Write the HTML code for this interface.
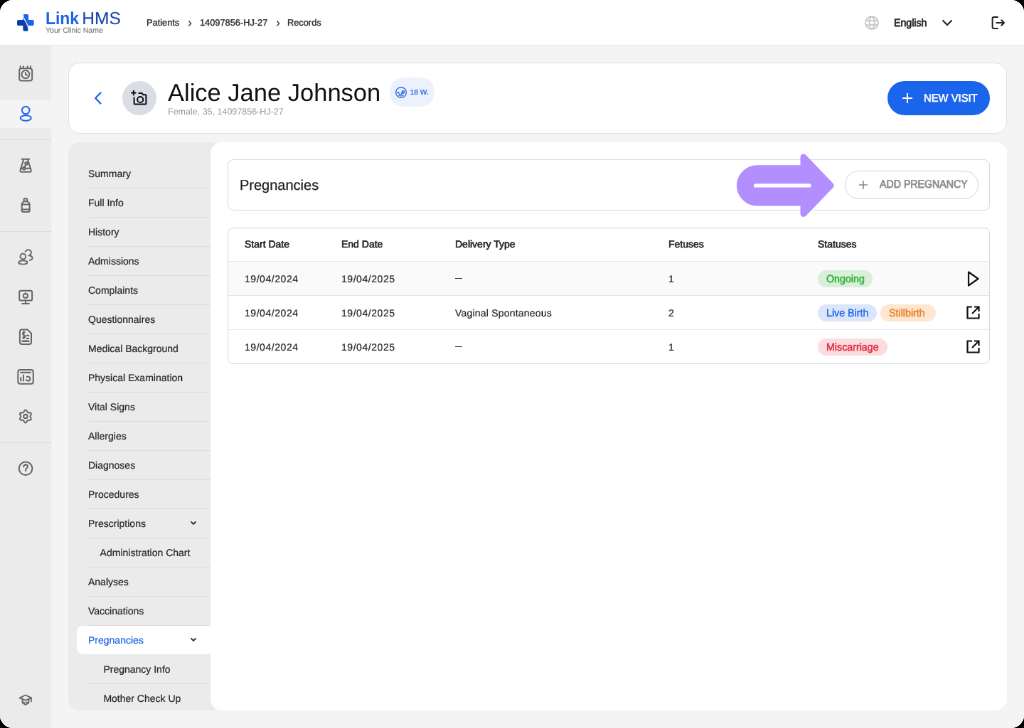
<!DOCTYPE html>
<html><head><meta charset="utf-8">
<style>
html,body{margin:0;padding:0;background:#000;width:1024px;height:728px;overflow:hidden}
#frame{position:absolute;left:0;top:0;width:1024px;height:728px;border-radius:13px;overflow:hidden;background:#f4f4f4}
#app{position:absolute;left:0;top:0;width:1440px;height:1024px;transform:scale(0.711111);text-rendering:geometricPrecision;will-change:transform;transform-origin:0 0;font-family:"Liberation Sans",sans-serif;color:#222;background:#f4f4f4}
.a{position:absolute;white-space:nowrap}
svg{position:absolute;overflow:visible}
/* header */
#hdr{position:absolute;left:0;top:0;width:1440px;height:63px;background:#fff;border-bottom:1px solid #e6e6e6}
/* sidebar */
#side{position:absolute;left:0;top:64px;width:72px;height:960px;background:#ebebeb}
.sdiv{position:absolute;left:0;width:72px;height:1px;background:#dcdcdc}
/* header card */
#pcard{position:absolute;left:96px;top:88px;width:1318px;height:98px;background:#fff;border:1px solid #dde2e8;border-radius:16px}
#menu{position:absolute;left:96px;top:200px;width:216px;height:799px;background:#ebebeb;border-radius:16px;overflow:hidden}
.mi{position:absolute;left:28px;width:200px;height:40px;border-bottom:1px solid #dcdcdc}
.mt{position:absolute;font-size:14px;color:#262626;line-height:16px;top:12px;-webkit-text-stroke:0.2px #262626}
#content{position:absolute;left:296px;top:200px;width:1120px;height:799px;background:#fff;border-radius:16px}
.card{position:absolute;background:#fff;border:1px solid #d3d9e0;border-radius:8px}
.th{position:absolute;font-size:14px;color:#222;line-height:16px;-webkit-text-stroke:0.6px #222}
.td{position:absolute;font-size:14px;color:#262626;line-height:16px;-webkit-text-stroke:0.2px #262626}
.bt{position:absolute;left:12px;top:3.9px;font-size:15px;line-height:18px;white-space:nowrap;transform:scaleX(0.95);transform-origin:0 0}
.rowb{position:absolute;left:0;width:1070px;height:1px;background:#e2e6eb}
</style></head><body>
<div id="frame"><div id="app">

<!-- HEADER -->
<div id="hdr">
  <svg style="left:24px;top:19.8px" width="24" height="24" viewBox="0 0 24 24">
    <defs>
      <clipPath id="cu"><path d="M8.3 -1 L8.3 1 C8.5 8.5 16 12 16.1 22.7 L16.1 25 L25 25 L25 -1 Z"/></clipPath>
      <clipPath id="cl"><path d="M8.3 -1 L8.3 1 C8.5 8.5 16 12 16.1 22.7 L16.1 25 L-1 25 L-1 -1 Z"/></clipPath>
    </defs>
    <g clip-path="url(#cu)" fill="#1f63ea"><rect x="8.3" y="0" width="7.8" height="23.7" rx="2"/><rect x="0" y="8.1" width="23.7" height="7.9" rx="2"/></g>
    <g clip-path="url(#cl)" fill="#0b3db0"><rect x="8.3" y="0" width="7.8" height="23.7" rx="2"/><rect x="0" y="8.1" width="23.7" height="7.9" rx="2"/></g>
    <path d="M8.3 1 C8.5 8.5 16 12 16.1 22.7" stroke="#fff" stroke-width="1.3" fill="none"/>
  </svg>
  <div class="a" style="left:64.2px;top:12.6px;font-size:24.5px;line-height:28px;font-weight:bold;color:#1f63ea;transform:scaleX(0.935);transform-origin:0 0">Link</div>
  <div class="a" style="left:115.3px;top:12.6px;font-size:24.5px;line-height:28px;color:#1b48b2;-webkit-text-stroke:0.15px #1b48b2">HMS</div>
  <div class="a" style="left:64px;top:36.8px;font-size:10.5px;line-height:12px;color:#7c7c7c;-webkit-text-stroke:0.15px #7c7c7c">Your Clinic Name</div>

  <div class="a" style="left:206px;top:24px;font-size:12.8px;line-height:16px;color:#2a2a2a;-webkit-text-stroke:0.35px #2a2a2a">Patients</div>
  <svg style="left:263px;top:28px" width="8" height="10" viewBox="0 0 8 10"><path d="M2.5 1.5 L5.5 5 L2.5 8.5" stroke="#444" stroke-width="1.5" fill="none"/></svg>
  <div class="a" style="left:281px;top:24px;font-size:12.8px;line-height:16px;color:#2a2a2a;-webkit-text-stroke:0.35px #2a2a2a">14097856-HJ-27</div>
  <svg style="left:387px;top:28px" width="8" height="10" viewBox="0 0 8 10"><path d="M2.5 1.5 L5.5 5 L2.5 8.5" stroke="#444" stroke-width="1.5" fill="none"/></svg>
  <div class="a" style="left:404px;top:24px;font-size:12.8px;line-height:16px;color:#2a2a2a;-webkit-text-stroke:0.35px #2a2a2a">Records</div>

  <svg style="left:1216px;top:22px" width="20" height="20" viewBox="0 0 20 20" fill="none" stroke="#c2c2c2" stroke-width="1.7">
    <circle cx="10" cy="10" r="8.9"/><ellipse cx="10" cy="10" rx="3.5" ry="8.9"/><path d="M1.6 7 H18.4 M1.6 13 H18.4"/>
  </svg>
  <div class="a" style="left:1256.8px;top:24.9px;font-size:15px;line-height:16px;color:#1e1e1e;-webkit-text-stroke:0.75px #1e1e1e;transform:scaleX(0.945);transform-origin:0 0">English</div>
  <svg style="left:1324px;top:27px" width="16" height="10" viewBox="0 0 16 10"><path d="M1.5 1.5 L8 8 L14.5 1.5" stroke="#222" stroke-width="2" fill="none"/></svg>
  <svg style="left:1394px;top:22px" width="20" height="20" viewBox="0 0 20 20" fill="none" stroke="#222" stroke-width="2">
    <path d="M9.6 2 H3.6 Q1.6 2 1.6 4 V16 Q1.6 18 3.6 18 H9.6" stroke-linejoin="round"/><path d="M6.5 10 H18 M13.8 5.8 L18 10 L13.8 14.2" stroke-linejoin="round"/>
  </svg>
</div>

<!-- SIDEBAR -->
<div id="side">
  <div style="position:absolute;left:0;top:76px;width:72px;height:40px;background:#f4f4f4"></div>
  <div class="sdiv" style="top:132px"></div>
  <div class="sdiv" style="top:261px"></div>
  <div class="sdiv" style="top:558px"></div>
</div>


<!-- SIDEBAR ICONS -->
<svg style="left:24px;top:92px" width="24" height="24" viewBox="0 0 24 24" fill="none" stroke="#656565" stroke-width="2" stroke-linecap="round" stroke-linejoin="round">
  <rect x="3.2" y="4.3" width="17.9" height="17.3" rx="3"/>
  <path d="M4.7 1.2 V4 M8.9 1.2 V4 M14.7 1.2 V4 M18.9 1.2 V4"/>
  <circle cx="11.9" cy="12.6" r="5.5"/>
  <path d="M11.9 10 V12.8 L14.2 13.8" fill="#656565"/>
</svg>
<svg style="left:24px;top:148px" width="24" height="24" viewBox="0 0 24 24" fill="none" stroke="#2563eb" stroke-width="2">
  <circle cx="12.2" cy="7" r="5.3"/>
  <ellipse cx="12.2" cy="18" rx="7.6" ry="3.8"/>
</svg>
<svg style="left:24px;top:220px" width="24" height="24" viewBox="0 0 24 24" fill="none" stroke="#656565" stroke-width="2" stroke-linecap="round" stroke-linejoin="round">
  <path d="M6.7 3.8 H17.2"/>
  <path d="M9 4.9 L4.5 19.4 Q3.9 21.8 6.2 21.8 H17.9 Q20.2 21.8 19.6 19.4 L15.1 4.9"/>
  <path d="M5.2 16.7 H8 M11.7 16.7 H19"/>
  <circle cx="9.85" cy="16.7" r="1.8"/>
  <circle cx="13.07" cy="9.8" r="1.8"/>
  <path d="M12.3 11.5 L10.6 15"/>
</svg>
<svg style="left:24px;top:276px" width="24" height="24" viewBox="0 0 24 24" fill="none" stroke="#656565" stroke-width="2" stroke-linecap="round" stroke-linejoin="round">
  <rect x="9.6" y="3.3" width="4.6" height="4" rx="1"/>
  <path d="M9.6 7.3 L7.5 9.3 Q6.7 10.1 6.7 11.3 V20 Q6.7 22 8.7 22 H15.6 Q17.6 22 17.6 20 V11.3 Q17.6 10.1 16.8 9.3 L14.2 7.3"/>
  <path d="M6.7 11.4 H17.6 M6.7 18.6 H17.6"/>
</svg>
<svg style="left:24px;top:348px" width="24" height="24" viewBox="0 0 24 24" fill="none" stroke="#656565" stroke-width="1.9" stroke-linecap="round" stroke-linejoin="round">
  <circle cx="8.3" cy="12.6" r="3.9"/>
  <ellipse cx="8.3" cy="21" rx="6.1" ry="2.6"/>
  <path d="M11.6 5.6 Q14 2.6 17 3.4 Q20.6 4.6 19.6 8.6 Q18.8 11 16.6 11.3 Q21 11.9 21.6 14.6 Q21.6 17.4 17.6 17.9"/>
</svg>
<svg style="left:24px;top:404px" width="24" height="24" viewBox="0 0 24 24" fill="none" stroke="#656565" stroke-width="2" stroke-linecap="round" stroke-linejoin="round">
  <rect x="3.2" y="4.7" width="17.9" height="13.9" rx="2.2"/>
  <path d="M12 18.6 V22.6 M7.1 22.9 H16.9"/>
  <path d="M11.9 8.5 L14.8 10.2 V13.6 L11.9 15.3 L9 13.6 V10.2 Z" stroke-width="2.1"/>
</svg>
<svg style="left:24px;top:461px" width="24" height="24" viewBox="0 0 24 24" fill="none" stroke="#656565" stroke-width="2" stroke-linecap="round" stroke-linejoin="round">
  <path d="M6.4 2.6 H14.8 L20 7.8 V19.9 Q20 22.9 17 22.9 H6.9 Q3.9 22.9 3.9 19.9 V5.6 Q3.9 2.6 6.4 2.6 Z"/>
  <path d="M10.6 6.2 Q8 6 8 8 Q8 9.8 9.6 10.2 Q11.3 10.7 11.1 12.4 Q10.9 14.2 8.2 13.9 M9.4 5.2 V15"/>
  <path d="M13.3 10.7 H16.3 M13.3 14.9 H16.3"/>
  <path d="M7.6 18.8 H16.3" stroke-width="2.4"/>
</svg>
<svg style="left:24px;top:518px" width="24" height="24" viewBox="0 0 24 24" fill="none" stroke="#656565" stroke-width="2" stroke-linecap="round" stroke-linejoin="round">
  <rect x="1.3" y="2" width="21.4" height="19.7" rx="3"/>
  <path d="M5 5.7 H19"/>
  <path d="M5.2 13.3 V17.6 M8.9 9.6 V17.6"/>
  <path d="M13.6 12 Q15 11 16.8 11.8 Q18.6 13 18.3 15.2 Q17.8 17.6 15.4 17.6 Q13.6 17.6 12.6 16"/>
</svg>
<svg style="left:24px;top:574px" width="24" height="24" viewBox="0 0 24 24" fill="none" stroke="#656565" stroke-width="2" stroke-linecap="round" stroke-linejoin="round">
  <path d="M11.85 2.6 Q13.2 2.6 14.1 4.9 Q14.8 6.6 16.6 6.4 Q19 6.1 19.7 7.2 Q20.4 8.4 18.9 10.2 Q17.8 11.55 18.9 12.9 Q20.4 14.7 19.7 15.9 Q19 17 16.6 16.7 Q14.8 16.5 14.1 18.2 Q13.2 20.5 11.85 20.5 Q10.5 20.5 9.6 18.2 Q8.9 16.5 7.1 16.7 Q4.7 17 4 15.9 Q3.3 14.7 4.8 12.9 Q5.9 11.55 4.8 10.2 Q3.3 8.4 4 7.2 Q4.7 6.1 7.1 6.4 Q8.9 6.6 9.6 4.9 Q10.5 2.6 11.85 2.6 Z"/>
  <circle cx="11.85" cy="11.55" r="2.7"/>
</svg>
<svg style="left:24px;top:646px" width="24" height="24" viewBox="0 0 24 24" fill="none" stroke="#656565" stroke-width="2" stroke-linecap="round" stroke-linejoin="round">
  <circle cx="12.05" cy="12.8" r="9.3"/>
  <path d="M9.3 10.6 Q9.3 7.6 12.1 7.6 Q14.9 7.6 14.9 10.2 Q14.9 12 12.6 13.1 Q12.1 13.4 12.1 14.2 V16.2"/>
</svg>
<svg style="left:24px;top:972px" width="24" height="24" viewBox="0 0 24 24" fill="none" stroke="#656565" stroke-width="2" stroke-linecap="round" stroke-linejoin="round">
  <path d="M3.6 9.4 L11.9 5.5 L20.2 9.4 L11.9 12.9 Z" stroke-width="1.8"/>
  <path d="M7.5 11.4 V16.4 L11.9 19 L16.3 16.4 V11.4" stroke-width="1.8"/>
  <path d="M8.6 15.2 Q11.9 17.4 15.2 15.2" stroke-width="1.5"/>
  <path d="M19.8 9.6 V14.6" stroke-width="1.8"/>
</svg>

<!-- PATIENT CARD -->
<div id="pcard"></div>
<svg style="left:131px;top:128px" width="14" height="20" viewBox="0 0 14 20"><path d="M11 1.8 L3.2 10 L11 18.2" stroke="#1f63ea" stroke-width="2.3" fill="none"/></svg>
<div style="position:absolute;left:172px;top:114px;width:48px;height:48px;border-radius:24px;background:#d9dee6"></div>
<!-- camera plus -->
<svg style="left:184px;top:126px" width="24" height="24" viewBox="0 0 24 24" fill="none" stroke="#0d0d0d" stroke-width="2" stroke-linecap="butt" stroke-linejoin="round">
  <path d="M0.3 4.6 H7.5 M3.9 1 V8.2"/>
  <path d="M4.6 10.4 V19.8 Q4.6 20.6 5.4 20.6 H20.6 Q21.4 20.6 21.4 19.8 V8 Q21.4 7.2 20.6 7.2 H17.2 L15.4 5 H10.6"/>
  <circle cx="13.2" cy="14" r="4.1"/>
</svg>
<div class="a" style="left:236px;top:110.6px;font-size:34.5px;line-height:40px;color:#111">Alice Jane Johnson</div>
<div class="a" style="left:236px;top:150px;font-size:12.5px;line-height:14px;color:#9a9a9a">Female, 35, 14097856-HJ-27</div>
<div style="position:absolute;left:548px;top:109px;width:63px;height:41px;border-radius:20px;background:#ebf1fd"></div>
<svg style="left:556px;top:121.5px" width="16" height="16" viewBox="0 0 16 16" fill="none" stroke="#3b74e8" stroke-width="1.5" stroke-linecap="round"><circle cx="8" cy="8" r="7.3"/><path d="M2.7 8.1 Q3.6 7.2 4.6 8.2 Q5.6 11.3 7.6 11.1 Q9.2 10.8 8.9 8.9 Q8.6 7.4 9.8 6.6"/><circle cx="11" cy="6.9" r="1.3"/><path d="M8.8 9.4 Q10.8 10.2 12.3 8.8" stroke-width="1.3"/><path d="M4.2 12.2 Q8 13.6 11.8 12.2" stroke-width="1.1"/></svg>
<div class="a" style="left:576.5px;top:125.3px;font-size:10.3px;line-height:12px;font-weight:bold;color:#3b74e8">18 W.</div>
<div style="position:absolute;left:1248px;top:114px;width:144px;height:48px;border-radius:24px;background:#1b64ec"></div>
<svg style="left:1268px;top:130px" width="16" height="16" viewBox="0 0 16 16"><path d="M8 1 V15 M1 8 H15" stroke="#fff" stroke-width="2"/></svg>
<div class="a" style="left:1299.4px;top:130.4px;font-size:15.5px;line-height:18px;color:#fff;-webkit-text-stroke:0.6px #fff;transform:scaleX(0.955);transform-origin:0 0">NEW VISIT</div>

<!-- MENU -->
<div id="menu">
  <div class="mi" style="top:24px"><div class="mt" style="left:0px">Summary</div></div>
  <div class="mi" style="top:65px"><div class="mt" style="left:0px">Full Info</div></div>
  <div class="mi" style="top:106px"><div class="mt" style="left:0px">History</div></div>
  <div class="mi" style="top:147px"><div class="mt" style="left:0px">Admissions</div></div>
  <div class="mi" style="top:188px"><div class="mt" style="left:0px">Complaints</div></div>
  <div class="mi" style="top:229px"><div class="mt" style="left:0px">Questionnaires</div></div>
  <div class="mi" style="top:270px"><div class="mt" style="left:0px">Medical Background</div></div>
  <div class="mi" style="top:311px"><div class="mt" style="left:0px">Physical Examination</div></div>
  <div class="mi" style="top:352px"><div class="mt" style="left:0px">Vital Signs</div></div>
  <div class="mi" style="top:393px"><div class="mt" style="left:0px">Allergies</div></div>
  <div class="mi" style="top:434px"><div class="mt" style="left:0px">Diagnoses</div></div>
  <div class="mi" style="top:475px"><div class="mt" style="left:0px">Procedures</div></div>
  <div class="mi" style="top:516px"><div class="mt" style="left:0px">Prescriptions</div></div>
  <svg style="left:171px;top:532px" width="10" height="8" viewBox="0 0 10 8"><path d="M1.5 1.5 L5 5 L8.5 1.5" stroke="#333" stroke-width="1.8" fill="none"/></svg>
  <div class="mi" style="top:557px"><div class="mt" style="left:16.6px">Administration Chart</div></div>
  <div class="mi" style="top:598px"><div class="mt" style="left:0px">Analyses</div></div>
  <div class="mi" style="top:639px"><div class="mt" style="left:0px">Vaccinations</div></div>
  <div style="position:absolute;left:12px;top:680px;width:220px;height:40px;background:#fff;border-radius:8px"></div>
  <div class="mi" style="top:680px;border-bottom-color:transparent"><div class="mt" style="left:0;color:#1f63ea;-webkit-text-stroke:0.2px #1f63ea">Pregnancies</div></div>
  <svg style="left:171px;top:696px" width="10" height="8" viewBox="0 0 10 8"><path d="M1.5 1.5 L5 5 L8.5 1.5" stroke="#333" stroke-width="1.8" fill="none"/></svg>
  <div class="mi" style="top:721px"><div class="mt" style="left:21.4px">Pregnancy Info</div></div>
  <div class="mi" style="top:762px"><div class="mt" style="left:21.4px">Mother Check Up</div></div>
</div>

<!-- CONTENT -->
<div id="content">
  <div class="card" style="left:24px;top:24px;width:1070px;height:70px">
    <div class="a" style="left:16px;top:23.9px;font-size:20px;line-height:24px;color:#1e1e1e;-webkit-text-stroke:0.25px #1e1e1e">Pregnancies</div>
    <div style="position:absolute;left:867px;top:15px;width:185.6px;height:37.6px;border:1.2px solid #d2d2d2;border-radius:20px"></div>
    <svg style="left:886px;top:28px" width="14" height="14" viewBox="0 0 14 14"><path d="M7 1 V13 M1 7 H13" stroke="#8a8a8a" stroke-width="1.6"/></svg>
    <div class="a" style="left:915.5px;top:26.2px;font-size:15.5px;line-height:18px;color:#8c8c8c;-webkit-text-stroke:0.75px #8c8c8c;transform:scaleX(0.915);transform-origin:0 0">ADD PREGNANCY</div>
  </div>
  <div class="card" style="left:24px;top:120px;width:1070px;height:190px;overflow:hidden">
    <div style="position:absolute;left:0;top:47px;width:1070px;height:47px;background:#fafafa"></div>
    <div class="rowb" style="top:46px"></div>
    <div class="rowb" style="top:94px"></div>
    <div class="rowb" style="top:142px"></div>
    <div class="th" style="left:23px;top:14.2px">Start Date</div>
    <div class="th" style="left:159px;top:14.2px">End Date</div>
    <div class="th" style="left:319px;top:14.2px">Delivery Type</div>
    <div class="th" style="left:619px;top:14.2px">Fetuses</div>
    <div class="th" style="left:829px;top:14.2px">Statuses</div>
    <div class="td" style="left:23px;top:63.4px;letter-spacing:0.55px">19/04/2024</div>
    <div class="td" style="left:159px;top:63.4px;letter-spacing:0.55px">19/04/2025</div>
    <div style="position:absolute;left:319px;top:69.9px;width:10.4px;height:1.41px;background:#333"></div>
    <div class="td" style="left:619px;top:63.4px">1</div>
    <div class="td" style="left:23px;top:111.4px;letter-spacing:0.55px">19/04/2024</div>
    <div class="td" style="left:159px;top:111.4px;letter-spacing:0.55px">19/04/2025</div>
    <div class="td" style="left:319px;top:111.4px;letter-spacing:0.2px">Vaginal Spontaneous</div>
    <div class="td" style="left:619px;top:111.4px">2</div>
    <div class="td" style="left:23px;top:159.4px;letter-spacing:0.55px">19/04/2024</div>
    <div class="td" style="left:159px;top:159.4px;letter-spacing:0.55px">19/04/2025</div>
    <div style="position:absolute;left:319px;top:165.6px;width:10.4px;height:1.41px;background:#333"></div>
    <div class="td" style="left:619px;top:159.4px">1</div>
    <div style="position:absolute;left:829px;top:58.8px;width:77px;height:24px;border-radius:12px;background:#d9efd9"><div class="bt" style="color:#33b03c;-webkit-text-stroke:0.5px #33b03c">Ongoing</div></div>
    <div style="position:absolute;left:829px;top:106.8px;width:83px;height:24px;border-radius:12px;background:#dce6fb"><div class="bt" style="color:#2b6de8;-webkit-text-stroke:0.5px #2b6de8">Live Birth</div></div>
    <div style="position:absolute;left:917px;top:106.8px;width:77.6px;height:24px;border-radius:12px;background:#fde7d3"><div class="bt" style="color:#ec8526;-webkit-text-stroke:0.5px #ec8526">Stillbirth</div></div>
    <div style="position:absolute;left:829px;top:154.8px;width:98.3px;height:24px;border-radius:12px;background:#fbdcdf"><div class="bt" style="color:#e5283c;-webkit-text-stroke:0.5px #e5283c">Miscarriage</div></div>
    <svg style="left:1039px;top:60px" width="18" height="22" viewBox="0 0 18 22"><path d="M2 1.5 L15.5 11 L2 20.5 Z" stroke="#111" stroke-width="2.2" fill="none" stroke-linejoin="round"/></svg>
    <svg style="left:1038px;top:109px" width="19" height="19" viewBox="0 0 19 19" fill="none" stroke="#111" stroke-width="2.2"><path d="M8 1.5 H1.5 V17.5 H17.5 V11"/><path d="M11 1.5 H17.5 V8 M17.5 1.5 L8 11"/></svg>
    <svg style="left:1038px;top:157px" width="19" height="19" viewBox="0 0 19 19" fill="none" stroke="#111" stroke-width="2.2"><path d="M8 1.5 H1.5 V17.5 H17.5 V11"/><path d="M11 1.5 H17.5 V8 M17.5 1.5 L8 11"/></svg>
  </div>
</div>


<!-- ANNOTATION ARROW -->
<svg style="left:1030px;top:210px" width="150" height="102" viewBox="1030 210 150 102">
  <path d="M1064.5 232.3 H1128 V289.5 H1064.5 A28.6 28.6 0 0 1 1064.5 232.3 Z" fill="#b38eff"/>
  <path d="M1130 221 L1168 260.8 L1130 300.5 Z" fill="#b38eff" stroke="#b38eff" stroke-width="9" stroke-linejoin="round"/>
  <path d="M1062.5 260.9 H1138" stroke="#fff" stroke-width="5.2" stroke-linecap="round"/>
</svg>
</div></div>
</body></html>
